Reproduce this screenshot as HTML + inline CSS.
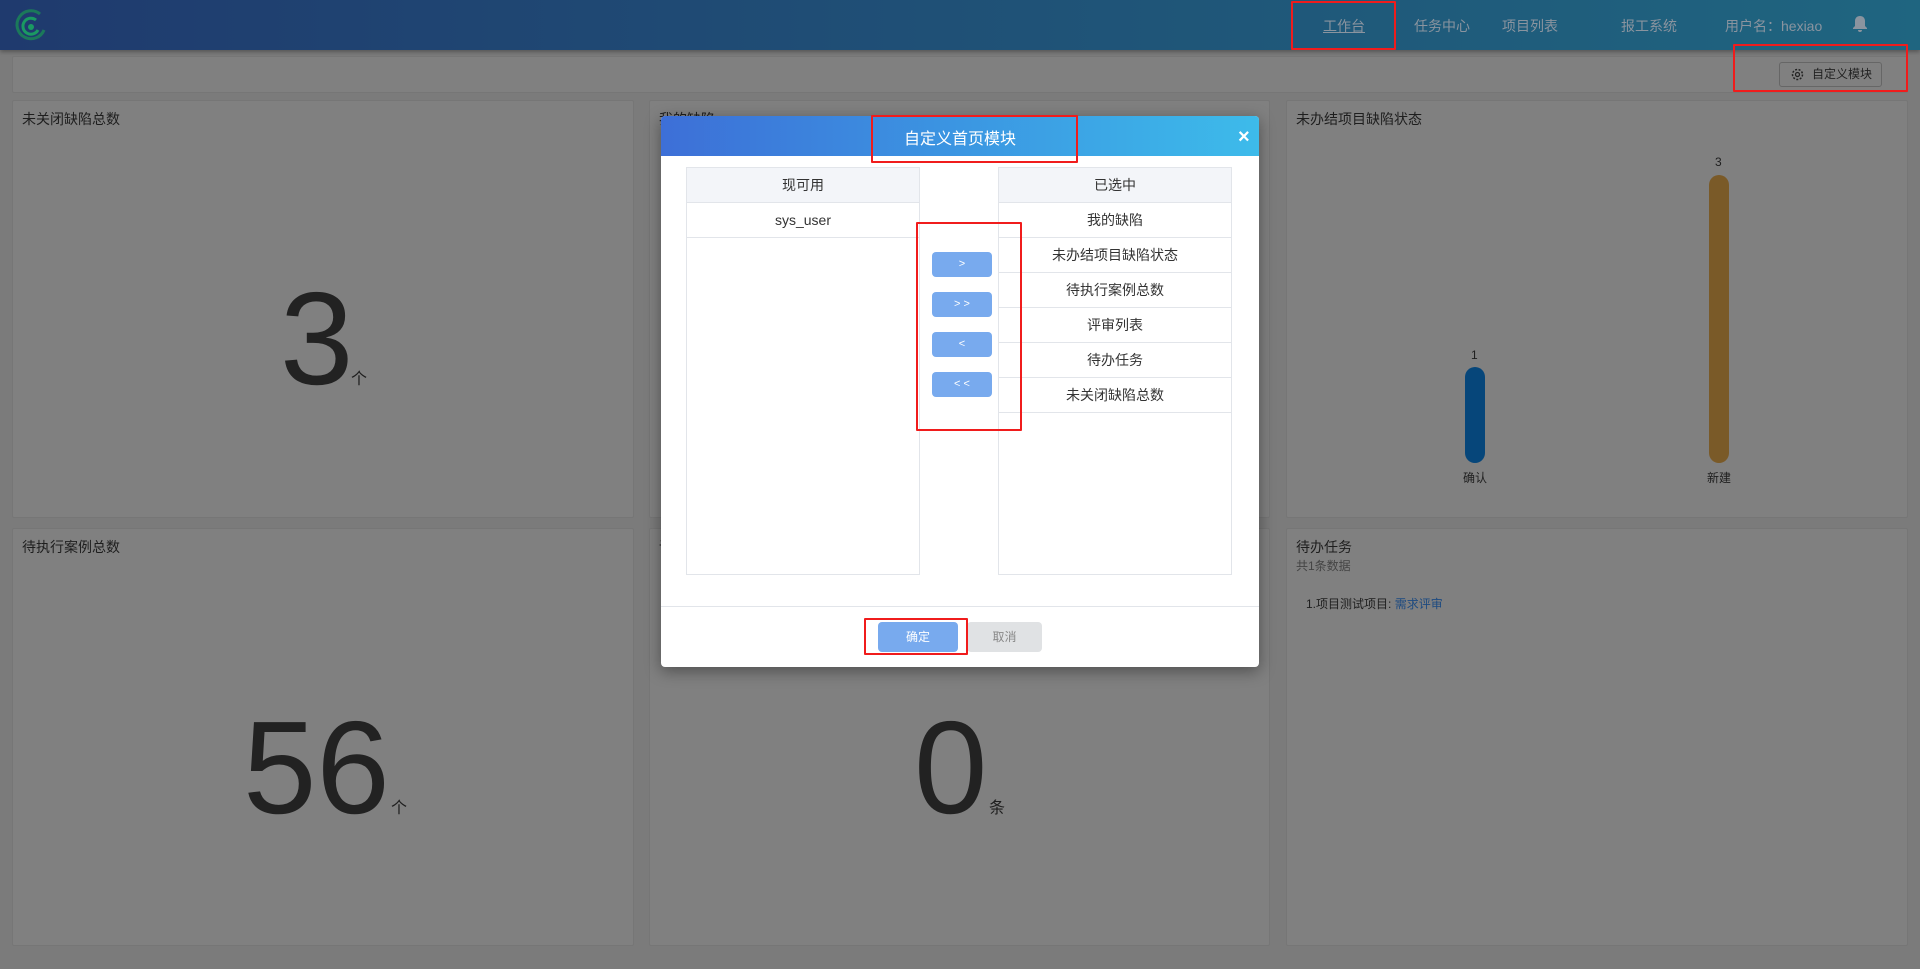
<!DOCTYPE html>
<html><head><meta charset="utf-8"><style>
*{margin:0;padding:0;box-sizing:border-box}
body{width:1920px;height:969px;overflow:hidden;background:#7b7b7b;font-family:"Liberation Sans","Noto Sans CJK SC",sans-serif;position:relative;color:#1e1e1e}
.a{position:absolute}
.hdr{left:0;top:0;width:1920px;height:50px;background:linear-gradient(90deg,#1f3a6e,#1f5578 60%,#1f6580);box-shadow:0 2px 4px rgba(0,0,0,.3)}
.nav{top:16px;font-size:14px;color:#8a949f}
.card{background:#808080;border:1px solid #767676;border-radius:2px}
.ct{font-size:14px;color:#1e1e1e}
.red{border:2px solid #f01c1c;border-radius:1px}
.big{font-size:132px;line-height:1;color:#222}
.modal{left:661px;top:116px;width:598px;height:551px;background:#fff;border-radius:4px;box-shadow:0 4px 16px rgba(0,0,0,.4);overflow:hidden}
.mh{left:0;top:0;width:598px;height:40px;background:linear-gradient(90deg,#3d6fd7,#3b96e2 50%,#3dbbea)}
.list{border:1px solid #e2e5ea;background:#fff}
.lh{height:35px;background:#f3f5f9;border-bottom:1px solid #e2e5ea;text-align:center;line-height:35px;font-size:14px;color:#333}
.li{height:35px;border-bottom:1px solid #e2e5ea;text-align:center;line-height:34px;font-size:14px;color:#333}
.btn{left:271px;width:60px;height:25px;background:#78aaee;border-radius:4px;color:#fff;font-size:11px;text-align:center;line-height:25px}
</style></head><body>
<div class="a hdr"></div>
<svg class="a" style="left:10px;top:6px" width="40" height="40" viewBox="0 0 40 40"><path d="M30 8 A14 14 0 1 0 34 24" fill="none" stroke="#1a8a55" stroke-width="3" opacity=".8"/><path d="M26 14 A8 8 0 1 0 28 24" fill="none" stroke="#1a9a62" stroke-width="3"/><circle cx="21" cy="21" r="3" fill="#1a9a62"/></svg>
<div class="a nav" style="left:1323px;text-decoration:underline">工作台</div>
<div class="a nav" style="left:1414px">任务中心</div>
<div class="a nav" style="left:1502px">项目列表</div>
<div class="a nav" style="left:1621px">报工系统</div>
<div class="a nav" style="left:1725px">用户名：hexiao</div>
<svg class="a" style="left:1852px;top:15px" width="16" height="18" viewBox="0 0 16 18"><path d="M8 1c-3 0-5 2-5 5v5l-2 2v1h14v-1l-2-2V6c0-3-2-5-5-5z M6 15h4a2 2 0 0 1-4 0z" fill="#8a949f"/></svg>
<div class="a red" style="left:1291px;top:1px;width:105px;height:49px"></div>

<div class="a card" style="left:12px;top:56px;width:1896px;height:37px"></div>
<div class="a" style="left:1779px;top:62px;width:103px;height:25px;border:1px solid #666;border-radius:3px;font-size:12px;line-height:23px;padding-left:32px;color:#222">自定义模块</div>
<svg class="a" style="left:1791px;top:68px" width="13" height="13" viewBox="0 0 13 13"><circle cx="6.5" cy="6.5" r="2" fill="none" stroke="#222" stroke-width="1.2"/><circle cx="6.5" cy="6.5" r="5" fill="none" stroke="#222" stroke-width="1.5" stroke-dasharray="2 1.5"/></svg>
<div class="a red" style="left:1733px;top:44px;width:175px;height:48px"></div>

<div class="a card" style="left:12px;top:100px;width:622px;height:418px"></div>
<div class="a card" style="left:649px;top:100px;width:621px;height:418px"></div>
<div class="a card" style="left:1286px;top:100px;width:622px;height:418px"></div>
<div class="a card" style="left:12px;top:528px;width:622px;height:418px"></div>
<div class="a card" style="left:649px;top:528px;width:621px;height:418px"></div>
<div class="a card" style="left:1286px;top:528px;width:622px;height:418px"></div>

<div class="a ct" style="left:22px;top:109px">未关闭缺陷总数</div>
<div class="a ct" style="left:659px;top:109px">我的缺陷</div>
<div class="a ct" style="left:1296px;top:109px">未办结项目缺陷状态</div>
<div class="a ct" style="left:22px;top:537px">待执行案例总数</div>
<div class="a ct" style="left:659px;top:537px">评审列表</div>
<div class="a ct" style="left:1296px;top:537px">待办任务</div>
<div class="a" style="left:1296px;top:557px;font-size:12px;color:#444">共1条数据</div>
<div class="a" style="left:1306px;top:595px;font-size:12px;color:#1e1e1e">1.项目测试项目: <span style="color:#1d4a80">需求评审</span></div>

<div class="a big" style="left:280px;top:273px">3</div>
<div class="a" style="left:351px;top:365px;font-size:16px">个</div>
<div class="a big" style="left:243px;top:702px">56</div>
<div class="a" style="left:391px;top:794px;font-size:16px">个</div>
<div class="a big" style="left:914px;top:702px">0</div>
<div class="a" style="left:989px;top:794px;font-size:16px">条</div>

<div class="a" style="left:1465px;top:367px;width:20px;height:96px;border-radius:10px;background:#06467a"></div>
<div class="a" style="left:1709px;top:175px;width:20px;height:288px;border-radius:10px;background:#7a5a28"></div>
<div class="a" style="left:1471px;top:348px;font-size:12px">1</div>
<div class="a" style="left:1715px;top:155px;font-size:12px">3</div>
<div class="a" style="left:1463px;top:469px;font-size:12px">确认</div>
<div class="a" style="left:1707px;top:469px;font-size:12px">新建</div>

<div class="a modal">
<div class="a mh"></div>
<div class="a" style="left:0;top:9px;width:598px;text-align:center;color:#fff;font-size:16px">自定义首页模块</div>
<div class="a" style="left:577px;top:10px;color:#fff;font-size:20px;font-weight:bold">×</div>
<div class="a list" style="left:25px;top:51px;width:234px;height:408px"><div class="lh">现可用</div><div class="li">sys_user</div></div>
<div class="a list" style="left:337px;top:51px;width:234px;height:408px"><div class="lh">已选中</div><div class="li">我的缺陷</div><div class="li">未办结项目缺陷状态</div><div class="li">待执行案例总数</div><div class="li">评审列表</div><div class="li">待办任务</div><div class="li">未关闭缺陷总数</div></div>
<div class="a btn" style="top:136px">&gt;</div>
<div class="a btn" style="top:176px">&gt; &gt;</div>
<div class="a btn" style="top:216px">&lt;</div>
<div class="a btn" style="top:256px">&lt; &lt;</div>
<div class="a" style="left:0;top:490px;width:598px;height:1px;background:#e2e5ea"></div>
<div class="a" style="left:217px;top:506px;width:80px;height:30px;background:#78aaee;border-radius:4px;color:#fff;font-size:12px;text-align:center;line-height:30px">确定</div>
<div class="a" style="left:306px;top:506px;width:75px;height:30px;background:#e0e2e4;border-radius:4px;color:#888;font-size:12px;text-align:center;line-height:30px">取消</div>
</div>
<div class="a red" style="left:871px;top:115px;width:207px;height:48px"></div>
<div class="a red" style="left:916px;top:222px;width:106px;height:209px"></div>
<div class="a red" style="left:864px;top:618px;width:104px;height:37px"></div>
</body></html>
